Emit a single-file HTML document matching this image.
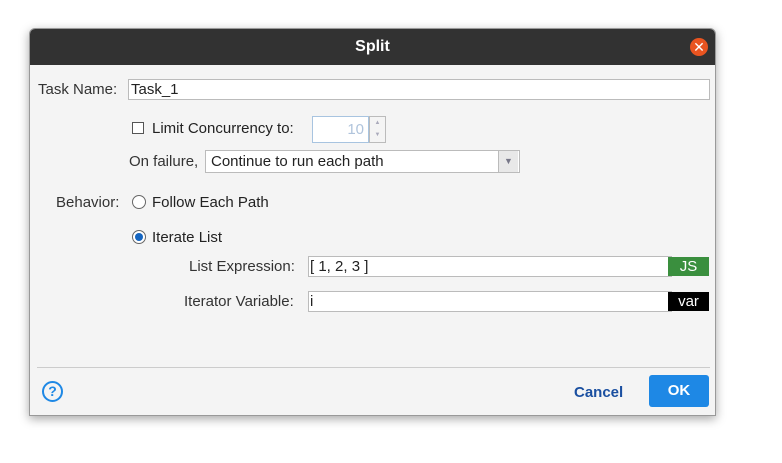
<!DOCTYPE html>
<html><head><style>
*{box-sizing:border-box;margin:0;padding:0}
body{width:782px;height:463px;background:#fff;font-family:"Liberation Sans",sans-serif;font-size:15px;color:#222;position:relative;overflow:hidden}
.dlg{position:absolute;left:29px;top:28px;width:687px;height:388px;background:#f4f4f4;border:1px solid #999;border-radius:6px 6px 0 0;box-shadow:0 3px 10px rgba(0,0,0,.35);overflow:hidden}
.tb{position:absolute;left:0;top:0;width:100%;height:36px;background:#323232;color:#fff;font-weight:bold;font-size:16px;text-align:center;line-height:36px}
.a{position:absolute;white-space:nowrap}
.f{position:absolute;background:#fff;border:1px solid #bbb}
</style></head><body>
<div class="dlg">
<div class="tb">Split</div>
<div class="a" style="left:660px;top:9px;width:18px;height:18px;border-radius:50%;background:#e95420;color:#fff;font-size:14px;line-height:18px;text-align:center">✕</div>
<div class="a" style="left:8px;top:52px;color:#333">Task Name:</div>
<div class="f" style="left:98px;top:50px;width:582px;height:21px;padding-left:2px;line-height:19px">Task_1</div>
<div class="a" style="left:102px;top:93px;width:12px;height:12px;border:1px solid #555;background:#fff"></div>
<div class="a" style="left:122px;top:91px">Limit Concurrency to:</div>
<div class="f" style="left:282px;top:87px;width:57px;height:27px;border-color:#a8c4e0;color:#b0c4dc;text-align:right;padding-right:4px;line-height:25px">10</div>
<div class="f" style="left:339px;top:87px;width:17px;height:27px;background:#f4f4f4"><div style="font-size:6px;color:#aab;text-align:center;line-height:12px">▲<br>▼</div></div>
<div class="a" style="left:99px;top:124px;color:#333">On failure,</div>
<div class="f" style="left:175px;top:121px;width:315px;height:23px;padding-left:5px;line-height:21px">Continue to run each path</div>
<div class="a" style="left:468px;top:122px;width:20px;height:21px;background:#e8e8e8;border-left:1px solid #bbb;color:#778;font-size:9px;text-align:center;line-height:21px">▼</div>
<div class="a" style="left:26px;top:165px;color:#333">Behavior:</div>
<div class="a" style="left:102px;top:166px;width:14px;height:14px;border:1px solid #666;border-radius:50%;background:#fff"></div>
<div class="a" style="left:122px;top:165px">Follow Each Path</div>
<div class="a" style="left:102px;top:201px;width:14px;height:14px;border:1px solid #666;border-radius:50%;background:#fff"><div style="margin:2px;width:8px;height:8px;border-radius:50%;background:#1565c0"></div></div>
<div class="a" style="left:122px;top:200px">Iterate List</div>
<div class="a" style="left:159px;top:229px;color:#333">List Expression:</div>
<div class="f" style="left:278px;top:227px;width:364px;height:21px;padding-left:1px;line-height:19px">[ 1, 2, 3 ]</div>
<div class="a" style="left:638px;top:228px;width:41px;height:19px;background:#3a8f3e;color:#fff;text-align:center;line-height:19px">JS</div>
<div class="a" style="left:154px;top:264px;color:#333">Iterator Variable:</div>
<div class="f" style="left:278px;top:262px;width:364px;height:21px;padding-left:1px;line-height:19px">i</div>
<div class="a" style="left:638px;top:263px;width:41px;height:19px;background:#000;color:#fff;text-align:center;line-height:19px">var</div>
<div class="a" style="left:7px;top:338px;width:673px;height:1px;background:#ccc"></div>
<div class="a" style="left:12px;top:352px;width:21px;height:21px;border:2px solid #1e88e5;border-radius:50%;color:#1e88e5;font-weight:bold;font-size:14px;text-align:center;line-height:17px">?</div>
<div class="a" style="left:544px;top:355px;color:#1a4fa0;font-weight:bold;font-size:15px">Cancel</div>
<div class="a" style="left:619px;top:346px;width:60px;height:32px;background:#1e88e5;border-radius:3px;color:#fff;font-weight:bold;font-size:15px;text-align:center;line-height:32px">OK</div>
</div>
</body></html>
